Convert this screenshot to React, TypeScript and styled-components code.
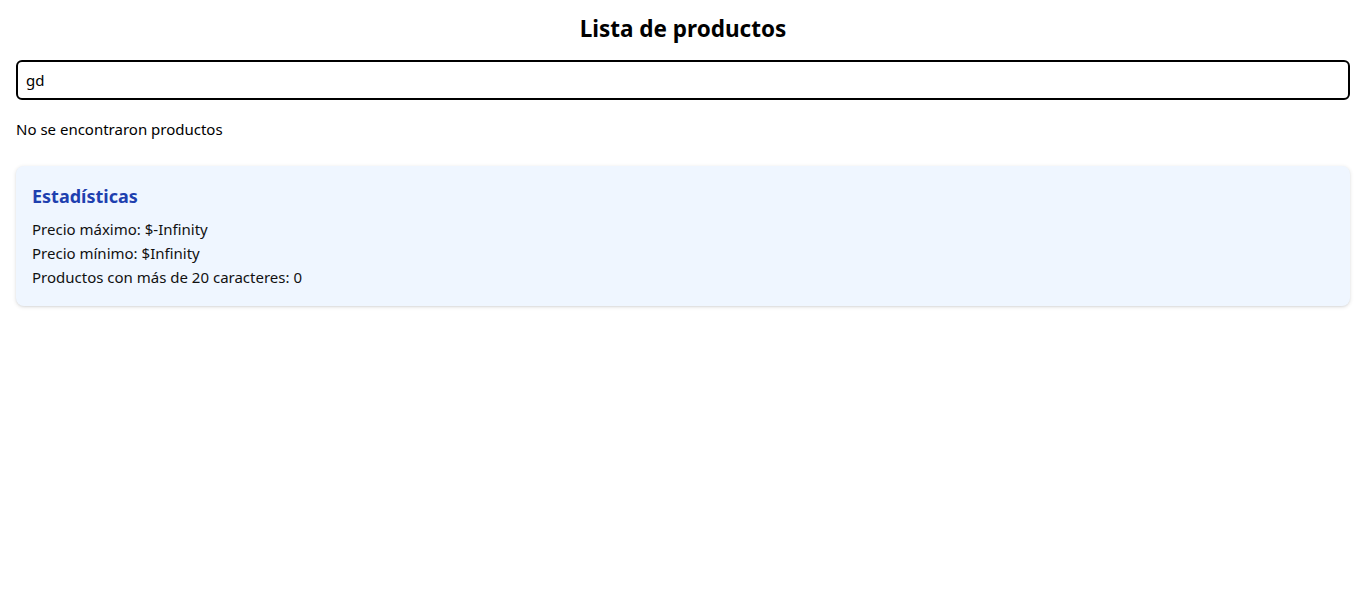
import React, {FC, useState} from 'react';
import styled, {createGlobalStyle} from 'styled-components';

const GlobalStyle = createGlobalStyle`
  * {
    box-sizing: border-box;
  }
  body {
    margin: 0;
    background: #ffffff;
    font-family: "Noto Sans", "Open Sans", sans-serif;
    color: #000000;
  }
`

interface Product {
    name: string;
    price: number;
}

const products: Product[] = [
    {name: 'Laptop', price: 1200},
    {name: 'Mouse', price: 25},
    {name: 'Teclado mecánico', price: 90},
    {name: 'Monitor de 27 pulgadas', price: 300},
]

const App: FC = () => {
    const [query, setQuery] = useState('gd')

    const filtered = products.filter(p => p.name.toLowerCase().includes(query.toLowerCase()))
    const prices = filtered.map(p => p.price)
    const max = Math.max(...prices)
    const min = Math.min(...prices)
    const longNames = filtered.filter(p => p.name.length > 20).length

    return (
        <Page>
            <GlobalStyle/>
            <Title>Lista de productos</Title>
            <SearchInput
                autoFocus
                value={query}
                onChange={e => setQuery(e.target.value)}
            />
            {filtered.length === 0
                ? <Empty>No se encontraron productos</Empty>
                : <List>{filtered.map(p => <li key={p.name}>{p.name} - ${p.price}</li>)}</List>
            }
            <StatsCard>
                <StatsTitle>Estadísticas</StatsTitle>
                <StatLine>Precio máximo: ${max}</StatLine>
                <StatLine>Precio mínimo: ${min}</StatLine>
                <StatLine>Productos con más de 20 caracteres: {longNames}</StatLine>
            </StatsCard>
        </Page>
    );
};

export default App;


const Page = styled.div`
  padding: 16px;
  display: flex;
  flex-direction: column;
`
const Title = styled.h1`
  margin: 0 0 18px;
  text-align: center;
  font-size: 22.5px;
  line-height: 26px;
  font-weight: 700;
`
const SearchInput = styled.input`
  width: 100%;
  height: 40px;
  padding: 0 8px;
  border: 2px solid #000;
  border-radius: 6px;
  font-family: inherit;
  font-size: 15px;
  color: #000;
  outline: none;
  margin-bottom: 16px;
`
const Empty = styled.p`
  margin: 1px 0 25px;
  font-size: 15px;
  line-height: 24px;
`
const List = styled.ul`
  margin: 0 0 26px;
`
const StatsCard = styled.div`
  background: #eff6ff;
  border-radius: 8px;
  padding: 16px 16px 17px;
  box-shadow: 0 1px 4px rgba(0, 0, 0, 0.12), 0 1px 2px rgba(0, 0, 0, 0.06);
`
const StatsTitle = styled.h2`
  margin: 0 0 7px;
  font-size: 18px;
  line-height: 28px;
  font-weight: 700;
  color: #1e40af;
`
const StatLine = styled.p`
  margin: 0;
  font-size: 15px;
  line-height: 24px;
  color: #111;
`
